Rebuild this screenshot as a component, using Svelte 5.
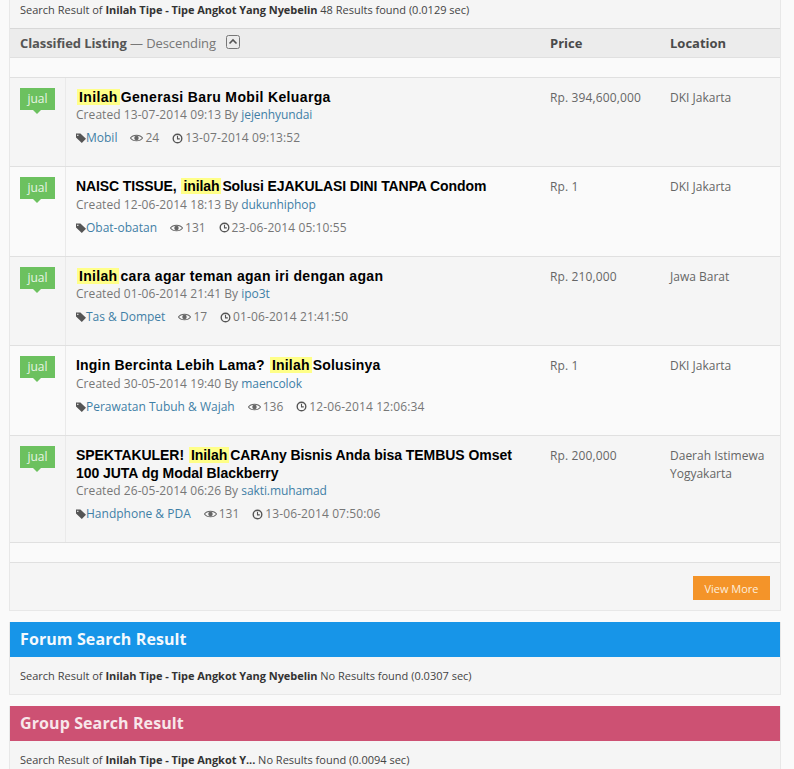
<script>
  // track: letter-spacing of the title, the reference's hinted Arial runs wider on lowercase
  const rows = [
    { pre: "", hl: "Inilah", post: "Generasi Baru Mobil Keluarga", track: 0.36, created: "13-07-2014 09:13", by: "jejenhyundai", cat: "Mobil", views: 24, seen: "13-07-2014 09:13:52", price: "Rp. 394,600,000", loc: "DKI Jakarta" },
    { pre: "NAISC TISSUE, ", hl: "inilah", post: "Solusi EJAKULASI DINI TANPA Condom", track: -0.1, created: "12-06-2014 18:13", by: "dukunhiphop", cat: "Obat-obatan", views: 131, seen: "23-06-2014 05:10:55", price: "Rp. 1", loc: "DKI Jakarta" },
    { pre: "", hl: "Inilah", post: "cara agar teman agan iri dengan agan", track: 0.32, created: "01-06-2014 21:41", by: "ipo3t", cat: "Tas & Dompet", views: 17, seen: "01-06-2014 21:41:50", price: "Rp. 210,000", loc: "Jawa Barat" },
    { pre: "Ingin Bercinta Lebih Lama? ", hl: "Inilah", post: "Solusinya", track: 0.2, created: "30-05-2014 19:40", by: "maencolok", cat: "Perawatan Tubuh & Wajah", views: 136, seen: "12-06-2014 12:06:34", price: "Rp. 1", loc: "DKI Jakarta" },
    { pre: "SPEKTAKULER! ", hl: "Inilah", post: "CARAny Bisnis Anda bisa TEMBUS Omset 100 JUTA dg Modal Blackberry", track: -0.05, created: "26-05-2014 06:26", by: "sakti.muhamad", cat: "Handphone & PDA", views: 131, seen: "13-06-2014 07:50:06", price: "Rp. 200,000", loc: "Daerah Istimewa Yogyakarta" }
  ];
  const query = "Inilah Tipe - Tipe Angkot Yang Nyebelin";
</script>

<div class="page">
  <section class="panel">
    <p class="summary">Search Result of <b>{query}</b> 48 Results found (0.0129 sec)</p>

    <div class="head">
      <div class="head-title">
        <b>Classified Listing</b> — Descending
        <span class="sort">
          <svg viewBox="0 0 14 14" width="14" height="14">
            <rect x="0.5" y="0.5" width="13" height="13" rx="2" fill="none" stroke="#777" />
            <path d="M3.5 8.5 L7 5 L10.5 8.5" fill="none" stroke="#555" stroke-width="1.6" />
          </svg>
        </span>
      </div>
      <div class="col-price"><b>Price</b></div>
      <div class="col-loc"><b>Location</b></div>
    </div>
    <div class="spacer top"></div>

    {#each rows as r, i}
      <div class="row" class:even={i % 2 === 1}>
        <div class="badge-cell"><span class="badge">jual</span></div>
        <div class="main">
          <h4 style={`letter-spacing:${r.track}px`}>{r.pre}<mark>{r.hl}</mark>{r.post}</h4>
          <div class="meta">Created {r.created} By <a href="#top">{r.by}</a></div>
          <div class="info">
            <span class="item tagged">
              <svg viewBox="0 0 10 10" width="10" height="10">
                <path d="M0 0.6 H4.4 L10 5.8 L5.8 10 L0 4.6 Z M1.2 1.8 h1.2 v1.2 h-1.2 Z" fill="#555" fill-rule="evenodd" />
              </svg>
              <a href="#top">{r.cat}</a>
            </span>
            <span class="item">
              <svg viewBox="0 0 14 10" width="13" height="10">
                <path d="M0.5 5 C3 1 11 1 13.5 5 C11 9 3 9 0.5 5 Z" fill="none" stroke="#666" stroke-width="1.1" />
                <circle cx="7" cy="5" r="2.4" fill="#666" />
              </svg>
              {r.views}
            </span>
            <span class="item seen">
              <svg viewBox="0 0 12 12" width="11" height="11">
                <circle cx="6" cy="6" r="4.7" fill="none" stroke="#555" stroke-width="1.5" />
                <path d="M6 3 V6.4 H8.5" fill="none" stroke="#555" stroke-width="1.2" />
              </svg>
              {r.seen}
            </span>
          </div>
        </div>
        <div class="col-price">{r.price}</div>
        <div class="col-loc">{r.loc}</div>
      </div>
    {/each}

    <div class="spacer"></div>
    <div class="foot"><a class="more" href="#top">View More</a></div>
  </section>

  <section class="panel block">
    <h3 class="forum">Forum Search Result</h3>
    <p class="summary line">Search Result of <b>{query}</b> No Results found (0.0307 sec)</p>
  </section>

  <section class="panel block">
    <h3 class="group">Group Search Result</h3>
    <p class="summary line">Search Result of <b>Inilah Tipe - Tipe Angkot Y...</b> No Results found (0.0094 sec)</p>
  </section>
</div>

<style>
  :global(body) {
    background: #fafafa;
    font-family: "Open Sans", sans-serif;
    overflow: hidden;
  }

  .page {
    height: 769px;
    overflow: hidden;
    padding: 0 13px 0 9px;
    font-size: 12px;
    color: #666;
  }

  .panel {
    background: #f5f5f5;
    border: 1px solid #e8e8e8;
    border-top: 0;
  }

  .block {
    margin-top: 11px;
  }

  p {
    margin: 0;
  }

  .summary {
    height: 28px;
    padding: 2px 10px 0;
    line-height: 16px;
    font-size: 11px;
    color: #444;
    box-sizing: border-box;
  }

  .summary b {
    color: #333;
    letter-spacing: -0.05px;
  }

  .line {
    height: 37px;
    padding-top: 11px;
  }

  .head {
    display: grid;
    grid-template-columns: 540px 120px 1fr;
    align-items: center;
    height: 30px;
    background: #ececec;
    border-top: 1px solid #d8d8d8;
    border-bottom: 1px solid #e0e0e0;
    box-sizing: border-box;
    font-size: 13px;
    color: #4a4a4a;
  }

  .head-title {
    padding-left: 10px;
    color: #777;
    display: flex;
    align-items: center;
    white-space: pre-wrap;
    letter-spacing: -0.1px;
  }

  .head-title b {
    color: #555;
  }

  .sort {
    display: flex;
    margin-left: 7px;
    margin-top: -3px;
  }

  .spacer {
    height: 20px;
    background: #fafafa;
    border-bottom: 1px solid #e0e0e0;
    box-sizing: border-box;
  }

  /* row pitch in the reference alternates 89/90 */
  .spacer.top {
    height: 19.75px;
  }

  .row {
    display: grid;
    grid-template-columns: 56px 484px 120px 1fr;
    background: #f5f5f5;
    border-bottom: 1px solid #e0e0e0;
    box-sizing: border-box;
  }

  .row.even {
    background: #fafafa;
  }

  .badge-cell {
    padding: 10px 0 0 10px;
    border-right: 1px solid #eaeaea;
  }

  .badge {
    display: block;
    position: relative;
    width: 35px;
    height: 22px;
    background: #6cc15f;
    color: #e8f5e4;
    text-align: center;
    line-height: 22px;
    font-size: 12px;
  }

  .badge::after {
    content: "";
    position: absolute;
    left: 13px;
    top: 22px;
    border: 4px solid transparent;
    border-top-color: #6cc15f;
    border-bottom: 0;
  }

  .main {
    padding: 10px 20px 19.25px 10px;
  }

  .row:nth-last-child(3) .main {
    padding-bottom: 18.5px;
  }

  h4 {
    margin: 0;
    font: bold 14px/18.25px "Liberation Sans", Arial, sans-serif;
    color: #000;
  }

  mark {
    background: #ffff88;
    color: #000;
    padding: 0 2px;
    margin: 0 1px;
  }

  .meta {
    line-height: 18px;
    color: #777;
    letter-spacing: 0.06px;
  }

  .meta a {
    letter-spacing: -0.1px;
  }

  a {
    color: #3f7fa6;
    text-decoration: none;
  }

  .info {
    display: flex;
    gap: 13px;
    margin-top: 5px;
    line-height: 18px;
    color: #777;
  }

  .item {
    display: flex;
    align-items: center;
    gap: 2px;
  }

  .item.tagged {
    gap: 0;
  }

  .item.seen {
    letter-spacing: 0.1px;
  }

  .row .col-price,
  .row .col-loc {
    padding-top: 11px;
    line-height: 18px;
    color: #666;
  }

  .row .col-price {
    letter-spacing: 0.13px;
  }

  .col-loc {
    padding-right: 8px;
  }

  .foot {
    display: flex;
    justify-content: flex-end;
    align-items: flex-start;
    height: 47px;
    padding: 13px 10px 0 0;
    box-sizing: border-box;
  }

  .more {
    background: #f49429;
    color: #fdeedd;
    width: 77px;
    height: 24px;
    line-height: 26px;
    text-align: center;
    font-size: 11px;
  }

  h3 {
    margin: 0;
    height: 35px;
    padding-left: 10px;
    font-size: 16px;
    font-weight: 700;
    line-height: 34px;
    letter-spacing: 0.1px;
    color: #f4f9fd;
    box-sizing: border-box;
  }

  .forum {
    background: #1795e8;
  }

  .group {
    background: #cd5173;
    color: #f8e6ea;
  }
</style>
